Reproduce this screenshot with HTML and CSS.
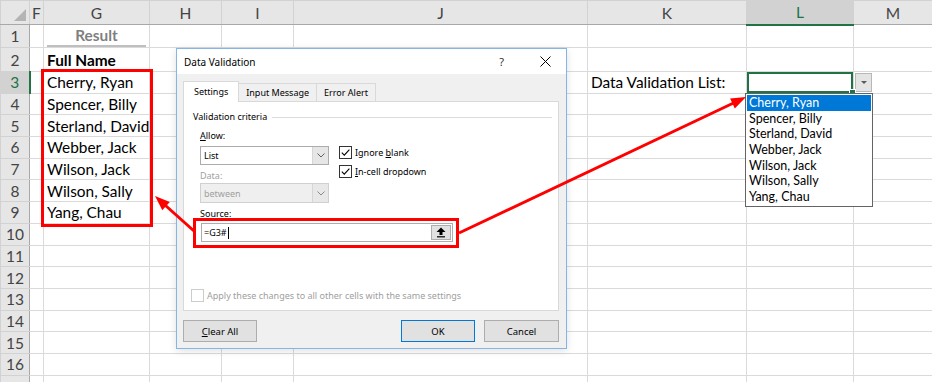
FILE: index.html
```html
<!DOCTYPE html>
<html lang="en">
<head>
  <meta charset="UTF-8">
  <title>Data Validation List</title>
  <link rel="stylesheet" href="styles.css">
</head>
<body>
  <div id="sheet">
    <table class="grid">
      <colgroup>
        <col class="c-rh"><col class="c-f"><col class="c-g"><col class="c-h"><col class="c-i"><col class="c-j"><col class="c-k"><col class="c-l"><col class="c-m">
      </colgroup>
      <tr class="hdr">
        <th class="corner"><svg width="28" height="22" viewBox="0 0 28 22"><polygon points="25,7 25,19 13,19" fill="#b4b4b4"/></svg></th>
        <th>F</th><th>G</th><th>H</th><th>I</th><th>J</th><th>K</th><th class="sel">L</th><th>M</th>
      </tr>
      <tr class="r1"><th>1</th><td></td><td class="title"><span>Result</span></td><td></td><td></td><td></td><td></td><td></td><td></td></tr>
      <tr class="r2"><th>2</th><td></td><td class="bold">Full Name</td><td></td><td></td><td></td><td></td><td></td><td></td></tr>
      <tr><th class="sel">3</th><td></td><td>Cherry, Ryan</td><td></td><td></td><td></td><td>Data Validation List:</td><td class="active"><span class="handle"></span></td><td class="dd-cell"><span class="dd-btn"></span></td></tr>
      <tr><th>4</th><td></td><td>Spencer, Billy</td><td></td><td></td><td></td><td></td><td></td><td></td></tr>
      <tr><th>5</th><td></td><td>Sterland, David</td><td></td><td></td><td></td><td></td><td></td><td></td></tr>
      <tr><th>6</th><td></td><td>Webber, Jack</td><td></td><td></td><td></td><td></td><td></td><td></td></tr>
      <tr><th>7</th><td></td><td>Wilson, Jack</td><td></td><td></td><td></td><td></td><td></td><td></td></tr>
      <tr><th>8</th><td></td><td>Wilson, Sally</td><td></td><td></td><td></td><td></td><td></td><td></td></tr>
      <tr><th>9</th><td></td><td>Yang, Chau</td><td></td><td></td><td></td><td></td><td></td><td></td></tr>
      <tr><th>10</th><td></td><td></td><td></td><td></td><td></td><td></td><td></td><td></td></tr>
      <tr><th>11</th><td></td><td></td><td></td><td></td><td></td><td></td><td></td><td></td></tr>
      <tr><th>12</th><td></td><td></td><td></td><td></td><td></td><td></td><td></td><td></td></tr>
      <tr><th>13</th><td></td><td></td><td></td><td></td><td></td><td></td><td></td><td></td></tr>
      <tr><th>14</th><td></td><td></td><td></td><td></td><td></td><td></td><td></td><td></td></tr>
      <tr><th>15</th><td></td><td></td><td></td><td></td><td></td><td></td><td></td><td></td></tr>
      <tr><th>16</th><td></td><td></td><td></td><td></td><td></td><td></td><td></td><td></td></tr>
      <tr><th></th><td></td><td></td><td></td><td></td><td></td><td></td><td></td><td></td></tr>
    </table>

    <div class="names-mark"></div>

    <div class="dialog">
      <div class="dlg-title">
        <span class="dlg-name">Data Validation</span>
        <span class="dlg-help">?</span>
        <svg class="dlg-close" width="11" height="11" viewBox="0 0 11 11"><path d="M0.5,0.5 L10.5,10.5 M10.5,0.5 L0.5,10.5" stroke="#000" stroke-width="1"/></svg>
      </div>
      <div class="dlg-body">
        <div class="tabs">
          <div class="tab active">Settings</div>
          <div class="tab">Input Message</div>
          <div class="tab">Error Alert</div>
        </div>
        <div class="panel">
          <div class="group-head"><span>Validation criteria</span></div>
          <div class="criteria">
            <div class="crit-left">
              <div class="lbl first"><u>A</u>llow:</div>
              <div class="select">
                <span class="val">List</span>
                <span class="arrow"><svg width="8" height="5" viewBox="0 0 8 5"><polyline points="0.5,0.5 4,4 7.5,0.5" fill="none" stroke="#606060"/></svg></span>
              </div>
              <div class="lbl muted">Data:</div>
              <div class="select disabled">
                <span class="val">between</span>
                <span class="arrow"><svg width="8" height="5" viewBox="0 0 8 5"><polyline points="0.5,0.5 4,4 7.5,0.5" fill="none" stroke="#8a8a8a"/></svg></span>
              </div>
            </div>
            <div class="crit-right">
              <div class="check"><span class="box"><svg width="11" height="11" viewBox="0 0 11 11"><polyline points="1.8,5.6 4.3,8.1 9.4,2.6" fill="none" stroke="#000" stroke-width="1.1"/></svg></span><span>Ignore <u>b</u>lank</span></div>
              <div class="check"><span class="box"><svg width="11" height="11" viewBox="0 0 11 11"><polyline points="1.8,5.6 4.3,8.1 9.4,2.6" fill="none" stroke="#000" stroke-width="1.1"/></svg></span><span><u>I</u>n-cell dropdown</span></div>
            </div>
          </div>
          <div class="lbl src-lbl">Source:</div>
          <div class="src-mark">
            <div class="source">
              <span class="src-text">=G3#</span><span class="caret"></span>
              <span class="src-btn"><svg width="10" height="11" viewBox="0 0 10 11"><polygon points="5,0.5 9.5,5 6.5,5 6.5,8 3.5,8 3.5,5 0.5,5" fill="#000"/><rect x="1" y="9.2" width="8" height="1.2" fill="#000"/></svg></span>
            </div>
          </div>
          <div class="apply"><span class="box off"></span><span>Apply these changes to all other cells with the same settings</span></div>
        </div>
        <div class="dlg-buttons">
          <button class="btn"><u>C</u>lear All</button>
          <button class="btn ok">OK</button>
          <button class="btn cancel">Cancel</button>
        </div>
      </div>
    </div>

    <ul class="dv-list">
      <li class="hi">Cherry, Ryan</li>
      <li>Spencer, Billy</li>
      <li>Sterland, David</li>
      <li>Webber, Jack</li>
      <li>Wilson, Jack</li>
      <li>Wilson, Sally</li>
      <li>Yang, Chau</li>
    </ul>

    <svg class="arrows" width="932" height="382" viewBox="0 0 932 382">
      <line x1="459" y1="233" x2="733.5" y2="103" stroke="#ff0000" stroke-width="3"/>
      <polygon points="746,97 734.8,108.4 730.1,98.4" fill="#ff0000"/>
      <line x1="194" y1="231" x2="165.5" y2="205.5" stroke="#ff0000" stroke-width="3"/>
      <polygon points="155,196 169.8,202.1 162.3,210.2" fill="#ff0000"/>
    </svg>
  </div>
</body>
</html>
```

FILE: styles.css
```css
body {
  margin: 0;
  background: #fff;
  font-family: Lato, 'Liberation Sans', sans-serif;
  overflow: hidden;
}
#sheet {
  position: relative;
  width: 932px;
  height: 382px;
  overflow: hidden;
}

/* spreadsheet grid */
.grid {
  border-collapse: collapse;
  table-layout: fixed;
  width: 932px;
  font-size: 15.4px;
  color: #000;
}
.c-rh { width: 29px; }
.c-f { width: 14px; }
.c-g { width: 106px; }
.c-h { width: 72px; }
.c-i { width: 72px; }
.c-j { width: 294px; }
.c-k { width: 159px; }
.c-l { width: 107px; }
.c-m { width: 79px; }
.grid tr { height: 21.7px; }
.grid tr.hdr { height: 24px; }
.grid tr.r1 { height: 23px; }
.grid tr.r2 { height: 24px; }
.grid th {
  background: #e6e6e6;
  font-weight: normal;
  font-size: 15.5px;
  color: #444;
  border: 1px solid #d2d2d2;
  padding: 0;
  text-align: center;
}
.grid tr.hdr th {
  border-bottom: 1px solid #a8a8a8;
}
.grid tr:not(.hdr) th {
  border-right: 1px solid #a8a8a8;
}
.grid th.corner svg {
  display: block;
}
.grid th.sel {
  background: #d2d2d2;
  color: #217346;
}
.grid tr.hdr th.sel {
  border-bottom: 2px solid #217346;
}
.grid tr:not(.hdr) th.sel {
  border-right: 2px solid #217346;
}
.grid td {
  border: 1px solid #dadada;
  padding: 0 3px;
  white-space: nowrap;
  overflow: visible;
  vertical-align: middle;
}
.grid td.title {
  text-align: center;
  font-weight: bold;
  color: #7f7f7f;
}
.grid td.title span {
  display: block;
  line-height: 19px;
  border-bottom: 2px solid #bfbfbf;
}
.grid td.bold {
  font-weight: bold;
}
.grid td.active {
  position: relative;
  box-shadow: inset 0 0 0 2px #217346;
}
.handle {
  position: absolute;
  right: -3px;
  bottom: -3px;
  width: 5px;
  height: 5px;
  background: #217346;
  border: 1px solid #fff;
}
.grid td.dd-cell {
  padding: 0 0 0 1px;
}
.dd-btn {
  display: flex;
  align-items: center;
  justify-content: center;
  width: 17px;
  height: 19px;
  box-sizing: border-box;
  background: #e4e4e4;
  border: 1px solid #b8b8b8;
}
.dd-btn::after {
  content: '';
  border-left: 3px solid transparent;
  border-right: 3px solid transparent;
  border-top: 3px solid #595959;
}

.names-mark {
  position: absolute;
  left: 41px;
  top: 69px;
  width: 112px;
  height: 158px;
  box-sizing: border-box;
  border: 3px solid #ff0000;
}

/* dialog */
.dialog {
  position: absolute;
  left: 176px;
  top: 48px;
  width: 391px;
  height: 301px;
  box-sizing: border-box;
  border: 1px solid #83b5e7;
  background: #f0f0f0;
  font-family: 'Noto Sans', 'Liberation Sans', sans-serif;
  font-size: 9px;
  color: #000;
  display: flex;
  flex-direction: column;
  box-shadow: 0 2px 8px rgba(0,0,0,0.12);
}
.dlg-title {
  height: 25px;
  flex: none;
  background: #fff;
  display: flex;
  align-items: center;
  padding: 0 15px 0 7px;
}
.dlg-name {
  flex: 1;
  font-size: 10px;
}
.dlg-help {
  font-size: 11px;
  color: #333;
  margin-right: 36px;
}
.dlg-body {
  flex: 1;
  padding: 7px 7px 6px 6px;
  display: flex;
  flex-direction: column;
}
.tabs {
  display: flex;
  align-items: flex-end;
  height: 21px;
  margin-bottom: -1px;
  position: relative;
  z-index: 1;
}
.tab {
  height: 18px;
  line-height: 17px;
  padding: 0 7px;
  box-sizing: border-box;
  border: 1px solid #d9d9d9;
  border-bottom: none;
  margin: 0 0 1px -1px;
  background: #f0f0f0;
}
.tab.active {
  height: 21px;
  line-height: 19px;
  padding: 0 10px;
  margin: 0;
  background: #fff;
}
.panel {
  height: 210px;
  box-sizing: border-box;
  border: 1px solid #d9d9d9;
  background: #fff;
  padding: 8px 6px 0 8px;
}
.group-head {
  display: flex;
  align-items: center;
  line-height: 14px;
  margin-left: 1px;
}
.group-head::after {
  content: '';
  flex: 1;
  height: 1px;
  background: #dcdcdc;
  margin-left: 5px;
}
.criteria {
  display: flex;
  margin-left: 8px;
}
.crit-left {
  width: 129px;
}
.lbl {
  line-height: 14px;
  margin-top: 4px;
}
.lbl.first {
  margin-top: 5px;
  margin-bottom: 3px;
}
.lbl.muted {
  color: #a0a0a0;
}
.select {
  height: 19px;
  box-sizing: border-box;
  border: 1px solid #acacac;
  background: #fff;
  display: flex;
  align-items: center;
}
.select .val {
  flex: 1;
  padding-left: 3px;
}
.select .arrow {
  width: 16px;
  height: 100%;
  box-sizing: border-box;
  background: #e6e6e6;
  border-left: 1px solid #d6d6d6;
  display: flex;
  align-items: center;
  justify-content: center;
}
.select.disabled {
  height: 20px;
  background: #efefef;
  border-color: #d0d0d0;
  color: #a0a0a0;
}
.select.disabled .arrow {
  background: #e8e8e8;
}
.crit-right {
  margin: 22px 0 0 10px;
}
.check {
  display: flex;
  align-items: center;
  height: 13px;
  margin-bottom: 6px;
}
.box {
  width: 13px;
  height: 13px;
  box-sizing: border-box;
  border: 1px solid #333;
  background: #fff;
  margin-right: 3px;
  display: flex;
  align-items: center;
  justify-content: center;
  flex: none;
}
.box.off {
  border-color: #cccccc;
}
.src-lbl {
  line-height: 12px;
  margin: 5px 0 0 8px;
}
.src-mark {
  width: 266px;
  box-sizing: border-box;
  border: 3px solid #ff0000;
  padding: 2px 3px 3px 5px;
  margin: -2px 0 0 1px;
}
.source {
  height: 19px;
  box-sizing: border-box;
  border: 1px solid #adadad;
  background: #fff;
  display: flex;
  align-items: center;
}
.src-text {
  padding-left: 2px;
}
.caret {
  width: 1px;
  height: 12px;
  background: #000;
  margin-left: 1px;
}
.src-btn {
  margin: 0 1px 0 auto;
  width: 20px;
  height: 15px;
  box-sizing: border-box;
  background: #e1e1e1;
  border: 1px solid #adadad;
  display: flex;
  align-items: center;
  justify-content: center;
}
.apply {
  display: flex;
  align-items: center;
  margin: 41px 0 0 -1px;
  color: #a0a0a0;
  height: 13px;
}
.dlg-buttons {
  display: flex;
  margin-top: 9px;
}
.btn {
  width: 74px;
  height: 22px;
  box-sizing: border-box;
  border: 1px solid #adadad;
  background: #e1e1e1;
  font-family: inherit;
  font-size: 9.5px;
  color: #000;
  padding: 0;
}
.btn.ok {
  margin-left: auto;
  border-color: #0078d7;
}
.btn.cancel {
  width: 75px;
  margin-left: 9px;
}

/* dropdown list */
.dv-list {
  position: absolute;
  left: 745px;
  top: 93px;
  width: 128px;
  box-sizing: border-box;
  margin: 0;
  padding: 1px;
  list-style: none;
  border: 1px solid #646464;
  background: #fff;
  font-size: 12.5px;
}
.dv-list li {
  height: 15.7px;
  line-height: 15.7px;
  padding-left: 2px;
  white-space: nowrap;
}
.dv-list li.hi {
  background: #0078d7;
  color: #fff;
}

.arrows {
  position: absolute;
  left: 0;
  top: 0;
  pointer-events: none;
}
```
